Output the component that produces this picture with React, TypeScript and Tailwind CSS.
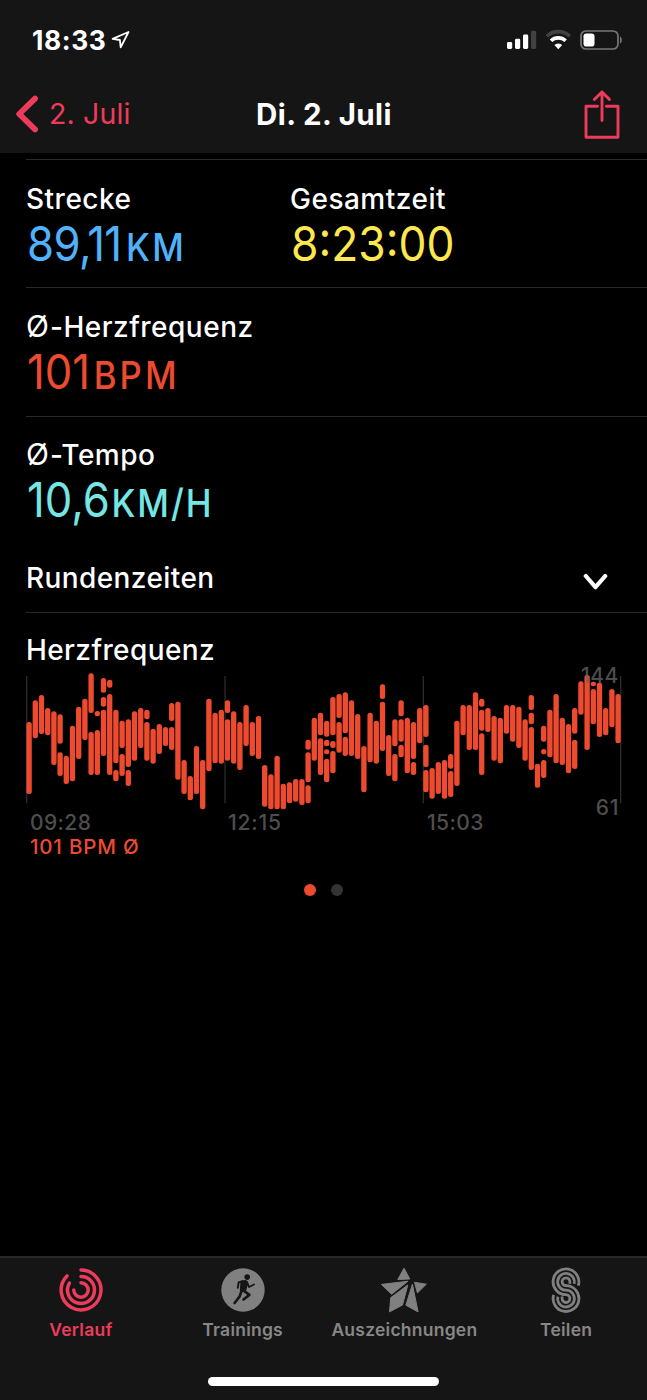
import React from "react";

type Segment = [number, number];

const heartRate: Segment[][] = [
  [[171, 387]], [[106, 220]], [[90, 207]], [[129, 211]], [[139, 300]],
  [[148, 236], [262, 333]], [[272, 357]], [[182, 349]], [[125, 282]], [[101, 225]],
  [[25, 144], [201, 330]], [[138, 154], [195, 330]], [[39, 83], [96, 125], [134, 273]],
  [[44, 68], [87, 330]], [[134, 295], [315, 349]], [[167, 249], [267, 333]],
  [[163, 306], [315, 363]], [[139, 287]], [[129, 249]], [[134, 163], [171, 287]],
  [[191, 296]], [[177, 267]], [[186, 243]], [[114, 168], [186, 255]], [[110, 344]],
  [[285, 387]], [[333, 406]], [[243, 387]], [[285, 433]], [[101, 319]],
  [[143, 295]], [[134, 296]], [[106, 144], [163, 287]], [[139, 296]], [[171, 315]],
  [[120, 243]], [[171, 273]], [[153, 282]], [[300, 425]], [[328, 433]],
  [[272, 433]], [[356, 433]], [[352, 415]], [[342, 410]], [[342, 420]],
  [[224, 254], [262, 352], [361, 415]], [[158, 287]], [[143, 211], [220, 330]],
  [[167, 215], [224, 244], [253, 268], [281, 352]], [[96, 211], [228, 249], [258, 325]],
  [[87, 159], [171, 263]], [[82, 205], [215, 273]], [[106, 273]], [[147, 282]],
  [[243, 382]], [[143, 292]], [[167, 296]], [[58, 102], [110, 258]], [[210, 333]],
  [[163, 244], [267, 349]], [[106, 154], [163, 230], [239, 277]], [[158, 325]],
  [[171, 282], [291, 330]], [[129, 235]], [[120, 216], [239, 306], [315, 382]],
  [[309, 401]], [[291, 387]], [[285, 401]], [[267, 311], [318, 396]], [[167, 363]],
  [[120, 211]], [[120, 255]], [[82, 255]], [[101, 125], [134, 197], [205, 330]],
  [[129, 201]], [[153, 287]], [[158, 295]], [[120, 206]], [[120, 230]], [[125, 249]],
  [[163, 287]], [[90, 135], [143, 178], [186, 315]], [[296, 368]],
  [[182, 230], [252, 268], [285, 339]], [[134, 277]], [[87, 295]], [[158, 300]],
  [[177, 325]], [[129, 206], [224, 312]], [[49, 149]], [[30, 255]],
  [[50, 64], [72, 178]], [[53, 216]], [[129, 211]], [[72, 187]], [[87, 235]],
];

function StatusBar() {
  return (
    <div className="flex h-[76px] items-start justify-between pl-8 pr-[24px] pt-[25px]">
      <div className="flex items-center gap-[5px]">
        <span className="text-[26.4px] font-bold leading-[30px] tracking-[0.6px] text-white">18:33</span>
        <svg className="mt-[-1px] h-[19px] w-[19px]" viewBox="0 0 19 19" fill="none">
          <path d="M17.5 2 1.6 8.8l7.3 1.2.8 7.4z" stroke="#fff" strokeWidth="1.8" strokeLinejoin="round" />
        </svg>
      </div>
      <svg className="mt-[4px] h-[22px] w-[116px]" viewBox="0 0 116 22">
        <g fill="#fff">
          <rect x="0" y="13" width="5.2" height="7" rx="1.4" />
          <rect x="8" y="9.7" width="5.2" height="10.3" rx="1.4" />
          <rect x="16" y="5.6" width="5.2" height="14.4" rx="1.4" />
          <rect x="24" y="1.7" width="5.2" height="18.3" rx="1.4" fill="#414141" />
        </g>
        <g fill="none" strokeWidth="3.6">
          <path d="M39.8 7.3a16.4 16.4 0 0 1 23 0" stroke="#414141" />
          <path d="M44 11.8a10.5 10.5 0 0 1 14.6 0" stroke="#fff" />
        </g>
        <path d="M47.4 16a5.7 5.7 0 0 1 7.8 0l-3.9 4.2z" fill="#fff" />
        <rect x="74" y="2" width="37" height="18" rx="5" fill="none" stroke="#777" strokeWidth="1.7" />
        <path d="M113 7.4c2.5 1 2.5 6 0 7.2z" fill="#777" />
        <rect x="76.5" y="4.5" width="11" height="13" rx="2.8" fill="#fff" />
      </svg>
    </div>
  );
}

function NavBar() {
  return (
    <div className="grid h-[76px] grid-cols-3 items-center pl-4 pr-[27px]">
      <div className="flex items-center gap-[10px]">
        <svg className="mt-[-1px] h-[38px] w-[23px]" viewBox="0 0 23 38" fill="none">
          <path d="M19 3.6 3.2 19 19 34.4" stroke="#ed3b5b" strokeWidth="5.8" strokeLinecap="round" strokeLinejoin="round" />
        </svg>
        <span className="whitespace-nowrap text-[28.5px] leading-9 tracking-[0.15px] text-[#ed3b5b]">2. Juli</span>
      </div>
      <h1 className="ml-[12px] whitespace-nowrap text-center text-[29.5px] font-bold leading-9 tracking-[0.4px] text-white">Di. 2. Juli</h1>
      <svg className="h-[50px] w-[36px] justify-self-end" viewBox="0 0 36 50" fill="none" stroke="#ed3b5b" strokeWidth="2.9" strokeLinecap="round" strokeLinejoin="round">
        <path d="M13.5 17.2H2v31.1h32V17.2H22.4M18 31.5V3M10.4 10.4 18 3l7.4 7.4" />
      </svg>
    </div>
  );
}

function AverageSign() {
  return <span className="text-[30px] font-normal tracking-[1px]">Ø</span>;
}

interface MetricProps {
  label: string;
  average?: boolean;
  value: string;
  unit?: string;
  className: string;
  valueClass?: string;
  unitClass?: string;
}

function Metric({ label, average, value, unit, className, valueClass = "", unitClass = "" }: MetricProps) {
  return (
    <div className="whitespace-nowrap">
      <div className="h-[34px] text-[28px] font-medium leading-[34px] tracking-[0.5px] text-white">
        {average && <AverageSign />}
        {label}
      </div>
      <div className={`ml-px flex h-[54px] w-max origin-left items-baseline leading-[54px] ${average ? "mt-[2px]" : "mt-px"} ${className}`}>
        <span className={`text-[48.5px] ${valueClass}`}>{value}</span>
        {unit && <span className={`text-[38.5px] font-medium ${unitClass}`}>{unit}</span>}
      </div>
    </div>
  );
}

function HeartChart() {
  return (
    <section className="flex flex-col">
      <h2 className="ml-[26px] mt-[20px] text-[28px] font-medium leading-[34px] tracking-[0.4px] text-white">Herzfrequenz</h2>
      <div className="relative ml-5 mt-[-2px] h-[145px] w-[607px]">
        <svg className="h-[145px] w-[607px]" viewBox="0 0 1821 435">
          <g fill="#2a2a2a">
            {[18, 613, 1208, 1800].map((x) => (
              <rect key={x} x={x} y="33" width="4" height="382" />
            ))}
          </g>
          <g fill="#ed4b2f">
            {heartRate.map((segments, i) =>
              segments.map(([top, bottom]) => (
                <rect key={`${i}-${top}`} x={19.3 + i * 18.6} y={top} width="16" height={bottom - top} rx="7.5" />
              )),
            )}
          </g>
        </svg>
        <span className="absolute right-[8px] top-[-2px] text-[21px] font-medium leading-[26px] tracking-[0.6px] text-[#666666]/75">144</span>
        <span className="absolute right-[8px] top-[130px] text-[21px] font-medium leading-[26px] tracking-[0.6px] text-[#4e4e4e]">61</span>
      </div>
      <div className="ml-[30px] mt-px grid grid-cols-[198px_199px_1fr] text-[21px] font-medium leading-6 tracking-[0.4px] text-[#4e4e4e]">
        <span>09:28</span>
        <span className="tracking-[0.8px]">12:15</span>
        <span>15:03</span>
      </div>
      <div className="ml-[30px] whitespace-nowrap text-[20.5px] font-medium leading-6 tracking-[0.8px] text-[#ed4b2f]">101 BPM Ø</div>
      <div className="mt-[25px] flex justify-center gap-[15px]">
        <span className="h-3 w-3 rounded-full bg-[#ed4b2f]" />
        <span className="h-3 w-3 rounded-full bg-[#333333]" />
      </div>
    </section>
  );
}

function HistoryIcon() {
  return (
    <svg className="h-[44px] w-[44px]" viewBox="0 0 44 44" fill="none" stroke="#ed3b5b" strokeWidth="3.5" strokeLinecap="round">
      <path d="M22 2.1A19.9 19.9 0 1 1 8 7.9" />
      <path d="M22 8.5A13.5 13.5 0 1 1 10.4 15.1" />
      <path d="M22 14.8A7.2 7.2 0 1 1 14.8 22" />
    </svg>
  );
}

function TrainingIcon() {
  return (
    <svg className="h-[44px] w-[44px]" viewBox="0 0 44 44">
      <circle cx="22" cy="22" r="21.7" fill="#808080" />
      <circle cx="26.2" cy="9.1" r="2.8" fill="#151515" />
      <path d="m20.1 13 5-.5 1.7 2.4-2.3 8.3-5.2-.4z" fill="#151515" stroke="#151515" strokeLinejoin="round" />
      <g fill="none" stroke="#151515" strokeLinecap="round" strokeLinejoin="round">
        <path d="m21 13.4-3.4 1.1-.8 5.4M26 14.1l2 4.9 5-2.5" strokeWidth="1.9" />
        <path d="m20.8 22-2.1 6.4-5.1 6.6M22.6 22.6l5.8 4.3-5.9 4.6" strokeWidth="2.6" />
      </g>
    </svg>
  );
}

function AwardsIcon() {
  return (
    <svg className="h-[46px] w-[48px]" viewBox="0 0 48 46" fill="#808080" stroke="#808080" strokeWidth="1" strokeLinejoin="round">
      <path d="m24 1.2 5.8 10.8-12 .5z" />
      <path d="m1.4 17.4 26.6-3.2-16.4 13z" />
      <path d="m46.3 17.2-11.8-1.9 2.9 10.6z" />
      <path d="m27.8 18-17.1 12.7-1.2 14.2 13-6.9z" />
      <path d="m32.4 17.2-6.5 21 12.2 6.7z" />
    </svg>
  );
}

function ShareIcon() {
  return (
    <svg className="h-[46px] w-[30px]" viewBox="0 0 30 46" fill="none" stroke="#808080" strokeWidth="2.8">
      <path d="M27.3 18.6A12.9 12.9 0 1 0 15 27.7A3.9 3.9 0 1 1 11.1 31.6V29.6" />
      <path d="M23.2 16.8A8.4 8.4 0 1 0 15 23.2A8.4 8.4 0 1 1 6.8 29.6" />
      <path d="M18.9 16.8V14.8A3.9 3.9 0 1 0 15 18.7A12.9 12.9 0 1 1 2.7 27.8" />
    </svg>
  );
}

function TabBar() {
  const tabs = [
    { label: "Verlauf", icon: <HistoryIcon />, color: "text-[#ed3b5b]" },
    { label: "Trainings", icon: <TrainingIcon />, color: "text-[#878787]" },
    { label: "Auszeichnungen", icon: <AwardsIcon />, color: "text-[#878787]" },
    { label: "Teilen", icon: <ShareIcon />, color: "text-[#878787]" },
  ];
  return (
    <nav className="flex h-[144px] flex-col items-center border-t-2 border-[#292929] bg-[#151515]">
      <div className="grid w-full grid-cols-4 pt-[9px]">
        {tabs.map(({ label, icon, color }) => (
          <div key={label} className={`flex flex-col items-center ${color}`}>
            <div className="flex h-[46px] items-center">{icon}</div>
            <span className="mt-[5px] whitespace-nowrap text-[17.5px] font-semibold leading-6 tracking-[0.24px]">{label}</span>
          </div>
        ))}
      </div>
      <div className="mt-[35px] h-[9px] w-[231px] rounded-full bg-white" />
    </nav>
  );
}

export default function App() {
  return (
    <div className="flex h-[1400px] w-[647px] flex-col overflow-hidden bg-black font-['Inter',sans-serif]">
      <header className="h-[153px] bg-[#151515]">
        <StatusBar />
        <NavBar />
      </header>
      <main className="flex flex-1 flex-col">
        <div className="ml-[26px] mt-[6px] grid h-[128px] grid-cols-[264px_1fr] border-t border-[#292929] pt-[22px]">
          <Metric label="Strecke" value="89,11" unit="KM" className="scale-x-[0.9] text-[#50b2fb]" valueClass="tracking-[-0.6px]" unitClass="ml-[5px] tracking-[2.5px]" />
          <Metric label="Gesamtzeit" value="8:23:00" className="scale-x-[0.915] text-[#fde750]" />
        </div>
        <div className="ml-[26px] h-[129px] border-t border-[#292929] pt-[21px]">
          <Metric average label="-Herzfrequenz" value="101" unit="BPM" className="scale-x-[0.9] text-[#ed4b2f]" unitClass="ml-[4px] tracking-[3.5px]" />
        </div>
        <div className="ml-[26px] h-[127px] border-t border-[#292929] pt-[20px]">
          <Metric average label="-Tempo" value="10,6" unit="KM/H" className="scale-x-[0.9] text-[#75e6e3]" unitClass="ml-[2px] tracking-[2.2px]" />
        </div>
        <div className="ml-[26px] flex h-[70px] items-center justify-between border-b border-[#292929] pr-[39px]">
          <span className="text-[28px] font-medium leading-[34px] tracking-[0.4px] text-white">Rundenzeiten</span>
          <svg className="mt-[9px] h-[18px] w-[25px]" viewBox="0 0 25 18" fill="none">
            <path d="m2.8 3 9.7 11.2L22.2 3" stroke="#fff" strokeWidth="4.2" strokeLinecap="round" strokeLinejoin="round" />
          </svg>
        </div>
        <HeartChart />
      </main>
      <TabBar />
    </div>
  );
}
